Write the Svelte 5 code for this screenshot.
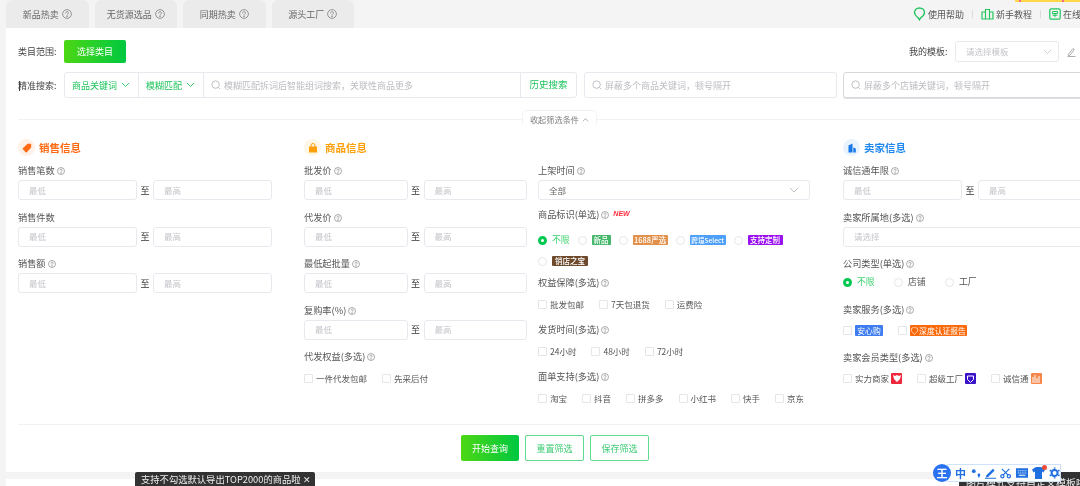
<script>
  const tabs = ['新品热卖', '无货源选品', '同期热卖', '源头工厂'];
  const salesFields = [
    { label: '销售笔数', help: true },
    { label: '销售件数', help: false },
    { label: '销售额', help: true }
  ];
  const goodsFields = ['批发价', '代发价', '最低起批量', '复购率(%)'];
  const badges = [
    { text: '新品', color: '#45b76a', w: 19, fs: 7.5 },
    { text: '1688严选', color: '#e2904a', w: 35, fs: 7.5 },
    { text: '跨境Select', color: '#4d9ffa', w: 36, fs: 6.6 },
    { text: '支持定制', color: '#9a10f0', w: 35, fs: 7.5 },
    { text: '销店之宝', color: '#6e4a2c', w: 36, fs: 7.5 }
  ];
  const multiGroups = [
    { label: '权益保障(多选)', items: ['批发包邮', '7天包退货', '运费险'], lead: true },
    { label: '发货时间(多选)', items: ['24小时', '48小时', '72小时'], lead: false },
    { label: '面单支持(多选)', items: ['淘宝', '抖音', '拼多多', '小红书', '快手', '京东'], lead: false }
  ];
</script>

{#snippet help(size = 8)}
  <svg class="help" width={size} height={size} viewBox="0 0 16 16" fill="none" stroke="#777" stroke-width="1.2">
    <circle cx="8" cy="8" r="7" />
    <path d="M5.8 6.3a2.2 2.2 0 1 1 3.4 1.8c-.8.5-1.2 1-1.2 1.9" stroke-linecap="round" />
    <circle cx="8" cy="12" r=".5" fill="#777" />
  </svg>
{/snippet}

{#snippet chevron(color = '#aaa', w = 9)}
  <svg width={w} height={w * 0.6} viewBox="0 0 10 6" fill="none" stroke={color} stroke-width="1">
    <path d="M1 1l4 4 4-4" />
  </svg>
{/snippet}

{#snippet search()}
  <svg class="search" width="10" height="10" viewBox="0 0 12 12" fill="none" stroke="#b5b5bb" stroke-width="1">
    <circle cx="5.5" cy="5.5" r="4.5" />
    <path d="M9 9l2 2" />
  </svg>
{/snippet}

{#snippet range()}
  <div class="range">
    <div class="box">最低</div>
    <span class="to">至</span>
    <div class="box">最高</div>
  </div>
{/snippet}

<div class="page">
  <header class="top">
    <nav class="tabs">
      {#each tabs as t}
        <div class="tab">{t}{@render help(10)}</div>
      {/each}
    </nav>
    <div class="links">
      <span class="link">
        <svg width="13" height="14" viewBox="0 0 13 14" fill="none" stroke="#22c55e" stroke-width="1.4"><path d="M6.5 1C3.6 1 1.5 3 1.5 5.6c0 2.6 2.4 4.2 3.8 5.4l1.2 1.8 1-1.8C9 10 11.5 8.2 11.5 5.6 11.5 3 9.4 1 6.5 1z" /></svg>
        使用帮助
      </span>
      <i class="sep"></i>
      <span class="link">
        <svg width="13" height="12" viewBox="0 0 13 12" fill="none" stroke="#22c55e" stroke-width="1.2"><path d="M1 11V4h3.500v7M4.500 11V1.500h4V11M8.500 11V4H12v7M.5 11h12" /></svg>
        新手教程
      </span>
      <i class="sep"></i>
      <span class="link">
        <svg width="12" height="12" viewBox="0 0 12 12" fill="none" stroke="#22c55e" stroke-width="1.2"><rect x=".8" y=".8" width="10.4" height="10.4" rx="1.5" /><path d="M3.500 3.500h5v2h-5zM6 5.500v3.500M3.500 7.200h5" stroke-width="1" /></svg>
        在线客服
      </span>
    </div>
    <i class="promo"></i>
  </header>

  <main class="card">
    <div class="row-category">
      <span class="lead">类目范围:</span>
      <button class="primary small">选择类目</button>
      <div class="template">
        <span class="lead">我的模板:</span>
        <div class="tpl-select">请选择模板 {@render chevron('#c8c8cc')}</div>
        <svg class="edit" width="9" height="10" viewBox="0 0 9 10" fill="none" stroke="#999" stroke-width=".8"><path d="M1.500 7.200L6 1.500l1.300 1L3 8.200l-1.800.5zM.5 9.500h8" /></svg>
        <svg class="trash" width="6" height="10" viewBox="0 0 6 10" fill="none" stroke="#999" stroke-width=".8"><path d="M0 2h6M1 2v7h5" /></svg>
      </div>
    </div>

    <div class="row-search">
      <span class="lead cursor">精准搜索:</span>
      <div class="search-group">
        <div class="seg seg-key">商品关键词 {@render chevron('#22c55e')}</div>
        <div class="seg seg-match">模糊匹配 {@render chevron('#22c55e')}</div>
        <div class="seg grow">{@render search()}模糊匹配拆词后智能组词搜索&#xFF0C;关联性商品更多</div>
        <div class="seg history">历史搜索</div>
      </div>
      <div class="block-input">{@render search()}屏蔽多个商品关键词&#xFF0C;顿号隔开</div>
      <div class="block-input shop">{@render search()}屏蔽多个店铺关键词&#xFF0C;顿号隔开</div>
    </div>

    <div class="divider">
      <div class="collapse">收起筛选条件 <svg width="7" height="4" viewBox="0 0 10 6" fill="none" stroke="#888" stroke-width="1"><path d="M1 5l4-4 4 4" /></svg></div>
    </div>

    <div class="columns">
      <section class="col">
        <h3 class="title orange">
          <span class="ico bg-orange">
            <svg width="10" height="10" viewBox="0 0 10 10" fill="#ff6a13"><path d="M5.500 .8h3.200a.5.5 0 0 1 .5.5v3.200L4.800 9.200a.8.8 0 0 1-1.100 0L.8 6.300a.8.8 0 0 1 0-1.100z" /></svg>
          </span><span class="title-text">销售信息</span>
        </h3>
        {#each salesFields as f}
          <div class="label">{f.label}{#if f.help}{@render help()}{/if}</div>
          {@render range()}
        {/each}
      </section>

      <section class="col">
        <h3 class="title amber">
          <span class="ico bg-amber">
            <svg width="10" height="10" viewBox="0 0 10 10" fill="#ff9f0a"><path d="M1 3.500h8V9a.5.5 0 0 1-.5.5h-7A.5.5 0 0 1 1 9z" /><path d="M3 4V2.500a2 2 0 0 1 4 0V4" fill="none" stroke="#ff9f0a" /></svg>
          </span><span class="title-text">商品信息</span>
        </h3>
        {#each goodsFields as f}
          <div class="label">{f}{@render help()}</div>
          {@render range()}
        {/each}
        <div class="label checks-head">代发权益(多选){@render help()}</div>
        <div class="checks">
          <label class="check"><i></i>一件代发包邮</label>
          <label class="check"><i></i>先采后付</label>
        </div>
      </section>

      <section class="col">
        <div class="title spacer"></div>
        <div class="label">上架时间{@render help()}</div>
        <div class="box select">全部 {@render chevron('#c0c0c4', 10)}</div>
        <div class="label mark">商品标识(单选){@render help()}<em>NEW</em></div>
        <div class="radios">
          <label class="radio on"><i></i>不限</label>
          {#each badges as b}
            <label class="radio"><i></i><span class="badge" style:background={b.color} style:width="{b.w}px" style:font-size="{b.fs}px">{b.text}</span></label>
          {/each}
        </div>
        {#each multiGroups as g}
          <div class="label group" class:lead-group={g.lead}>{g.label}{@render help()}</div>
          <div class="checks">
            {#each g.items as it}
              <label class="check"><i></i>{it}</label>
            {/each}
          </div>
        {/each}
      </section>

      <section class="col">
        <h3 class="title blue">
          <span class="ico bg-blue">
            <svg width="10" height="10" viewBox="0 0 10 10" fill="#1677e8"><path d="M1.500 9.500V2.500L5.500 .5v9zM6.300 9.500V4.500l2.500 1v4z" /></svg>
          </span><span class="title-text">卖家信息</span>
        </h3>
        <div class="label">诚信通年限{@render help()}</div>
        {@render range()}
        <div class="label">卖家所属地(多选){@render help()}</div>
        <div class="box wide">请选择</div>
        <div class="label company">公司类型(单选){@render help()}</div>
        <div class="radios company-radios">
          <label class="radio on"><i></i>不限</label>
          <label class="radio"><i></i>店铺</label>
          <label class="radio"><i></i>工厂</label>
        </div>
        <div class="label section-gap">卖家服务(多选){@render help()}</div>
        <div class="checks">
          <label class="check"><i></i><span class="badge svc" style:background="#3f7cf0" style:width="28px">安心购</span></label>
          <label class="check"><i></i><span class="badge svc" style:background="#fb6a0a" style:width="57px">
            <svg width="7" height="8" viewBox="0 0 7 8" fill="none" stroke="#ffd9bf" stroke-width=".8"><path d="M.5 1.200L3.500.4l3 .8v3L3.500 7.500.5 4.200z" /></svg>深度认证报告</span></label>
        </div>
        <div class="label section-gap">卖家会员类型(多选){@render help()}</div>
        <div class="checks">
          <label class="check"><i></i>实力商家<span class="mini" style:background="#f0283c">
            <svg width="8" height="7" viewBox="0 0 8 7" fill="#fff"><path d="M0 0l2 1 2-1 2 1 2-1-1 4-3 3-3-3z" /></svg></span></label>
          <label class="check"><i></i>超级工厂<span class="mini" style:background="#3a13c9">
            <svg width="7" height="8" viewBox="0 0 7 8" fill="none" stroke="#fff"><path d="M.5 1h6v3.500L3.500 7.500.5 4.500z" /></svg></span></label>
          <label class="check"><i></i>诚信通<span class="mini" style:background="#f5874a">
            <svg width="8" height="8" viewBox="0 0 8 8" stroke="#fff" fill="none"><path d="M1 8V2M3 8V0M5 8V3M7 8V1" /></svg></span></label>
        </div>
      </section>
    </div>

    <div class="foot-line"></div>
    <div class="actions">
      <button class="primary large">开始查询</button>
      <button class="ghost">重置筛选</button>
      <button class="ghost">保存筛选</button>
    </div>
  </main>
  <div class="next-card"></div>

  <div class="tip left">支持不勾选默认导出TOP2000的商品啦 ✕</div>
  <div class="tip right">图片模式支持自定义模板啦</div>

  <div class="ime">
    <span class="ime-logo">王</span>
    <div class="ime-bar">
      <span class="zh">中</span>
      <svg width="11" height="11" viewBox="0 0 11 11" fill="#1f6fe0"><circle cx="3" cy="3" r="2" /><circle cx="8.5" cy="7" r="1.5" /><path d="M7.500 8.500l2-.5-1 2.500z" /></svg>
      <svg width="12" height="11" viewBox="0 0 12 11" fill="#1f6fe0"><path d="M1.500 7.500L8.500 .5l1.800 1.800-7 7-2.300.5zM0 10h12v1H0z" /></svg>
      <svg width="12" height="11" viewBox="0 0 12 11" fill="none" stroke="#1f6fe0" stroke-width="1.3"><circle cx="2.500" cy="8.500" r="1.700" /><circle cx="9.500" cy="8.500" r="1.700" /><path d="M3.500 7L10 .5M8.500 7L2 .5" /></svg>
      <svg width="13" height="10" viewBox="0 0 13 10" fill="#1f6fe0"><path fill-rule="evenodd" d="M0 0h13v10H0zM2 2v1h1V2zm2 0v1h1V2zm2 0v1h1V2zm2 0v1h1V2zm2 0v1h1V2zM2 4.500v1h1v-1zm2 0v1h1v-1zm2 0v1h1v-1zm2 0v1h1v-1zm2 0v1h1v-1zM3 7v1h7V7z" /></svg>
      <span class="shirt">
        <svg width="13" height="12" viewBox="0 0 13 12" fill="#1f6fe0"><path d="M4 0h5l4 2.500-1.500 3L10 4.500V12H3V4.500l-1.500 1L0 2.500z" /></svg>
        <i></i>
      </span>
      <svg width="12" height="12" viewBox="0 0 12 12" fill="none" stroke="#1f6fe0" stroke-width="2.2"><circle cx="6" cy="6" r="3.200" /><path d="M6 0v1.500M6 10.500V12M.8 3l1.300.8M9.900 8.200l1.300.8M.8 9l1.300-.8M9.900 3.800l1.300-.8" stroke-width="1.800" /></svg>
    </div>
  </div>
</div>

<style>
  :global(body) {
    margin: 0;
    background: #f4f4f4;
  }
  .page {
    position: relative;
    width: 1080px;
    height: 486px;
    overflow: hidden;
    background: #f4f4f4;
    font-family: "Noto Sans CJK SC", "Noto Sans", sans-serif;
    font-size: 9px;
    color: #555;
    line-height: 1;
    filter: blur(.3px);
  }
  button {
    font-family: inherit;
    cursor: pointer;
  }

  .top {
    position: relative;
    display: flex;
    justify-content: space-between;
    height: 28px;
    padding-left: 6px;
  }
  .tabs {
    display: flex;
    gap: 6px;
  }
  .tab {
    width: 82.5px;
    height: 28px;
    display: flex;
    align-items: center;
    justify-content: center;
    gap: 3px;
    background: #ebebeb;
    border-radius: 6px 6px 0 0;
    color: #666;
    font-size: 9px;
  }
  .links {
    display: flex;
    align-items: center;
    position: absolute;
    left: 913px;
    top: 7px;
    white-space: nowrap;
    font-size: 9px;
    color: #555;
  }
  .link {
    display: flex;
    align-items: center;
    gap: 2px;
  }
  .sep {
    width: 1px;
    height: 8px;
    background: #ddd;
    margin: 0 8px;
  }
  .promo {
    position: absolute;
    right: 0;
    top: 0;
    width: 65px;
    height: 2px;
    background: linear-gradient(90deg, #ffd84a 4px, #f56a8a 4px, #f56a8a 6px, #ffd84a 6px, #ffd84a 47px, #f56a8a 47px, #f56a8a 49px, #ffd84a 49px);
  }

  .card {
    margin-left: 6px;
    background: #fff;
    height: 444px;
    padding: 12px 0 0 12px;
    box-sizing: border-box;
  }
  .lead {
    min-width: 41px;
    font-size: 9px;
    color: #444;
    white-space: nowrap;
  }
  .row-category {
    display: flex;
    align-items: center;
    height: 23px;
    gap: 5px;
  }
  .primary {
    border: 0;
    border-radius: 2px;
    color: #fff;
    background: linear-gradient(90deg, #4cd714, #00c840);
    font-size: 9px;
    padding: 0;
  }
  .small {
    width: 62px;
    height: 23px;
  }
  .template {
    display: flex;
    align-items: center;
    margin-left: auto;
    margin-right: -8px;
    gap: 5px;
  }
  .tpl-select {
    width: 104px;
    height: 21px;
    box-sizing: border-box;
    border: 1px solid #e8e8ee;
    border-radius: 3px;
    padding: 0 6px 0 10px;
    display: flex;
    align-items: center;
    justify-content: space-between;
    color: #c4c4ca;
    font-size: 8.5px;
    margin-right: 3px;
  }
  .trash {
    margin-left: 1px;
  }
  .row-search {
    display: flex;
    align-items: center;
    margin-top: 9px;
    height: 26px;
    gap: 5px;
    margin-right: -40px;
  }
  .cursor {
    position: relative;
  }
  .cursor::before {
    content: "";
    position: absolute;
    left: 1px;
    top: 0;
    width: 1px;
    height: 10px;
    background: #444;
  }
  .search-group {
    display: flex;
    width: 513px;
    height: 26px;
    box-sizing: border-box;
    border: 1px solid #e8e8ee;
    border-radius: 3px;
    font-size: 9px;
    flex: none;
  }
  .seg {
    display: flex;
    align-items: center;
    white-space: nowrap;
    border-right: 1px solid #e8e8ee;
    color: #bcbcc2;
  }
  .seg-key {
    width: 74px;
    box-sizing: border-box;
    padding-left: 7px;
    gap: 4px;
    color: #1fc45c;
  }
  .seg-match {
    width: 65px;
    box-sizing: border-box;
    padding-left: 7px;
    gap: 4px;
    color: #1fc45c;
  }
  .grow {
    flex: 1;
    padding-left: 7px;
  }
  .history {
    width: 55px;
    justify-content: center;
    border-right: 0;
    color: #1fc45c;
    font-size: 9.5px;
  }
  .search {
    margin-right: 3px;
    flex: none;
  }
  .block-input {
    display: flex;
    align-items: center;
    width: 253px;
    height: 26px;
    box-sizing: border-box;
    border: 1px solid #e8e8ee;
    border-radius: 3px;
    padding-left: 7px;
    margin-left: 2px;
    color: #bcbcc2;
    font-size: 9px;
    flex: none;
  }
  .shop {
    width: 280px;
    margin-left: 1px;
    border: 1px solid #d8d8dc;
    box-shadow: 0 1px 0 #dedee2;
  }

  .divider {
    position: relative;
    height: 1px;
    margin-top: 21px;
    background: #f2f2f4;
  }
  .collapse {
    position: absolute;
    left: 504px;
    top: -9px;
    width: 73px;
    height: 9px;
    padding-top: 4px;
    background: #fff;
    border: 1px solid #f2f2f4;
    border-bottom: 0;
    border-radius: 5px 5px 0 0;
    display: flex;
    justify-content: center;
    align-items: center;
    gap: 3px;
    font-size: 8.2px;
    color: #808080;
    white-space: nowrap;
  }

  .columns {
    display: grid;
    grid-template-columns: 286px 234px 305px 300px;
    margin-top: 19px;
    height: 284px;
  }
  .title {
    display: flex;
    align-items: center;
    gap: 4px;
    height: 17px;
    margin: 0 0 7px;
    font-size: 10.5px;
    font-weight: 700;
  }
  .title-text {
    padding-top: 1px;
  }
  .spacer {
    visibility: hidden;
  }
  .orange { color: #ff6a13; }
  .amber { color: #ff9f0a; }
  .blue { color: #1e88f0; }
  .ico {
    width: 17px;
    height: 17px;
    border-radius: 50%;
    display: flex;
    align-items: center;
    justify-content: center;
  }
  .bg-orange { background: #fff1e8; }
  .bg-amber { background: #fff6e6; }
  .bg-blue { background: #e8f3fe; }

  .label {
    display: flex;
    align-items: center;
    gap: 2px;
    height: 16px;
    margin-bottom: 1px;
    font-size: 9.2px;
    color: #555;
    white-space: nowrap;
  }
  .range {
    display: flex;
    align-items: center;
    width: max-content;
    margin-bottom: 9.5px;
  }
  .to {
    width: 16px;
    text-align: center;
    font-size: 9px;
    color: #333;
  }
  .box {
    width: 119px;
    height: 20px;
    box-sizing: border-box;
    border: 1px solid #e8e8ee;
    border-radius: 3px;
    padding-left: 10px;
    display: flex;
    align-items: center;
    color: #c4c4ca;
    font-size: 8.5px;
  }
  .col:nth-child(2) .box {
    width: 103.5px;
  }
  .select {
    width: 272px;
    justify-content: space-between;
    padding-right: 10px;
    color: #666;
  }
  .wide {
    width: 300px;
    margin-bottom: 9px;
  }
  .checks-head {
    margin-bottom: 6px;
  }
  .mark {
    margin-top: 7px;
    margin-bottom: 10px;
  }
  .mark em {
    font-family: "Liberation Sans", sans-serif;
    font-size: 7px;
    font-weight: 700;
    font-style: italic;
    color: #ff2d3c;
    margin: -4px 0 0 2px;
  }
  .group {
    margin-top: 11px;
    margin-bottom: 6px;
  }
  .lead-group {
    margin-top: 7px;
  }
  .company {
    margin-bottom: 4px;
  }
  .radios {
    display: flex;
    flex-wrap: wrap;
    gap: 7px 8px;
    width: 262px;
  }
  .radios.company-radios {
    gap: 0;
    margin-bottom: 12px;
  }
  .company-radios .radio {
    width: 51px;
  }
  .section-gap {
    margin-bottom: 6px;
  }
  .section-gap + .checks + .section-gap {
    margin-top: 12px;
  }
  .radio {
    display: flex;
    align-items: center;
    height: 14px;
    gap: 5px;
    font-size: 8.8px;
    color: #555;
  }
  .radio i {
    width: 9px;
    height: 9px;
    box-sizing: border-box;
    border: 1px solid #e6e6ea;
    border-radius: 50%;
    flex: none;
  }
  .radio.on {
    color: #3ad06e;
  }
  .radio.on i {
    border: 3px solid #00c850;
    background: #fff;
  }
  .badge {
    display: inline-flex;
    align-items: center;
    justify-content: center;
    height: 10px;
    color: #fff;
    font-weight: 500;
    white-space: nowrap;
    border-radius: 1px;
  }
  .svc {
    height: 11px;
    gap: 1px;
    font-size: 7.8px;
    font-weight: 400;
  }
  .checks {
    display: flex;
    align-items: center;
    gap: 15px;
    height: 14px;
  }
  .check {
    display: flex;
    align-items: center;
    gap: 3px;
    font-size: 8.5px;
    color: #555;
    white-space: nowrap;
  }
  .check i {
    width: 9px;
    height: 9px;
    box-sizing: border-box;
    border: 1px solid #e6e6ea;
    border-radius: 1px;
    flex: none;
  }
  .mini {
    width: 11px;
    height: 11px;
    margin-left: -1px;
    display: inline-flex;
    align-items: center;
    justify-content: center;
    border-radius: 1px;
  }

  .foot-line {
    height: 1px;
    background: #f2f2f4;
    margin-top: 1px;
  }
  .actions {
    display: flex;
    gap: 6px;
    margin: 10px 0 0 443px;
  }
  .large {
    width: 58px;
    height: 26px;
  }
  .ghost {
    width: 59px;
    height: 26px;
    padding: 0;
    background: #fff;
    border: 1px solid #5fdc8e;
    border-radius: 2px;
    color: #3ecb74;
    font-size: 9px;
  }
  .next-card {
    margin: 7px 0 0 6px;
    height: 8px;
    background: #fff;
  }

  .tip {
    position: absolute;
    background: #333;
    color: #eee;
    font-size: 9.3px;
    white-space: nowrap;
  }
  .tip.left {
    left: 135px;
    top: 472px;
    width: 180px;
    height: 14px;
    box-sizing: border-box;
    padding: 3px 0 0 6px;
    border-radius: 2px 2px 0 0;
  }
  .tip.right {
    left: 959px;
    top: 472px;
    width: 121px;
    height: 14px;
    box-sizing: border-box;
    padding: 6px 0 0 7px;
    font-size: 10px;
  }

  .ime {
    position: absolute;
    left: 933px;
    top: 464px;
    display: flex;
    align-items: center;
    height: 18px;
  }
  .ime-logo {
    position: relative;
    z-index: 1;
    width: 18px;
    height: 18px;
    border-radius: 50%;
    background: #2a72f0;
    color: #fff;
    font-size: 11px;
    font-weight: 700;
    display: flex;
    align-items: center;
    justify-content: center;
  }
  .ime-bar {
    display: flex;
    align-items: center;
    gap: 4px;
    height: 18px;
    box-sizing: border-box;
    width: 114px;
    margin-left: -4px;
    padding-left: 7px;
    background: #fff;
    border: 1px solid #cfe2fb;
  }
  .zh {
    color: #1f6fe0;
    font-size: 11px;
    font-weight: 700;
    margin-right: 1px;
  }
  .shirt {
    position: relative;
    display: flex;
  }
  .shirt i {
    position: absolute;
    right: -2px;
    top: -2px;
    width: 5px;
    height: 5px;
    border-radius: 50%;
    background: #f04a3a;
  }
</style>
